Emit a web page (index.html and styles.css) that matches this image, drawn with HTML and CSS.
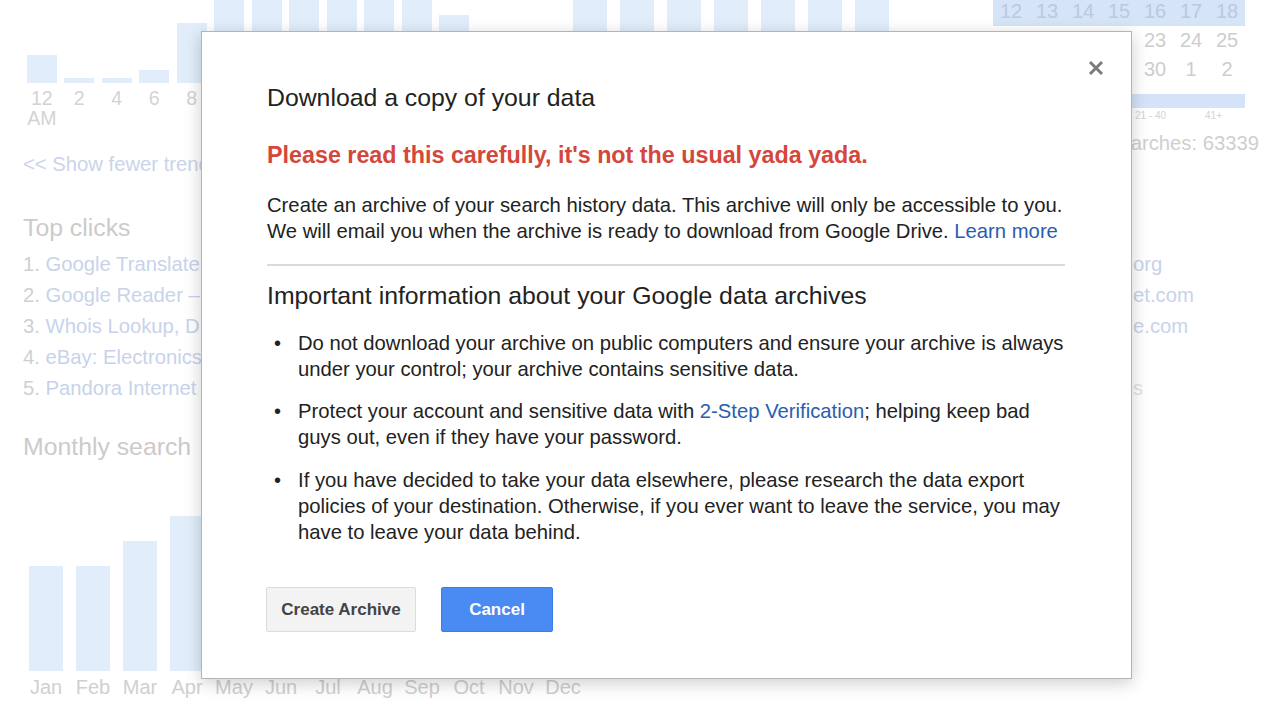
FILE: index.html
```html
<!DOCTYPE html>
<html lang="en">
<head>
<meta charset="utf-8">
<title>Download a copy of your data</title>
<link rel="stylesheet" href="styles.css">
</head>
<body>
<div class="page">
  <div class="col col-left">
    <div class="hbars">
      <div class="hcell"><div class="bar hbar" style="height:28px"></div></div>
      <div class="hcell"><div class="bar hbar" style="height:5px"></div></div>
      <div class="hcell"><div class="bar hbar" style="height:5px"></div></div>
      <div class="hcell"><div class="bar hbar" style="height:13px"></div></div>
      <div class="hcell"><div class="bar hbar" style="height:60px"></div></div>
      <div class="hcell"><div class="bar hbar" style="height:83px"></div></div>
      <div class="hcell"><div class="bar hbar" style="height:83px"></div></div>
      <div class="hcell"><div class="bar hbar" style="height:83px"></div></div>
      <div class="hcell"><div class="bar hbar" style="height:83px"></div></div>
      <div class="hcell"><div class="bar hbar" style="height:83px"></div></div>
      <div class="hcell"><div class="bar hbar" style="height:83px"></div></div>
      <div class="hcell"><div class="bar hbar" style="height:68px"></div></div>
    </div>
    <div class="hlabels">
      <span>12<br>AM</span><span>2</span><span>4</span><span>6</span><span>8</span>
    </div>
    <div class="fewer">&lt;&lt; Show fewer trends</div>
    <div class="section-title clicks-title">Top clicks</div>
    <ol class="clicks">
      <li><span class="num">1.</span> <span class="lnk">Google Translate</span></li>
      <li><span class="num">2.</span> <span class="lnk">Google Reader –</span></li>
      <li><span class="num">3.</span> <span class="lnk">Whois Lookup, D</span></li>
      <li><span class="num">4.</span> <span class="lnk">eBay: Electronics</span></li>
      <li><span class="num">5.</span> <span class="lnk">Pandora Internet</span></li>
    </ol>
    <div class="section-title monthly-title">Monthly search</div>
    <div class="mbars">
      <div class="mcell"><div class="bar mbar" style="height:105px"></div></div>
      <div class="mcell"><div class="bar mbar" style="height:105px"></div></div>
      <div class="mcell"><div class="bar mbar" style="height:130px"></div></div>
      <div class="mcell"><div class="bar mbar" style="height:155px"></div></div>
      <div class="mcell"><div class="bar mbar" style="height:150px"></div></div>
      <div class="mcell"><div class="bar mbar" style="height:140px"></div></div>
      <div class="mcell"><div class="bar mbar" style="height:160px"></div></div>
      <div class="mcell"><div class="bar mbar" style="height:150px"></div></div>
      <div class="mcell"><div class="bar mbar" style="height:145px"></div></div>
      <div class="mcell"><div class="bar mbar" style="height:135px"></div></div>
      <div class="mcell"><div class="bar mbar" style="height:120px"></div></div>
      <div class="mcell"><div class="bar mbar" style="height:110px"></div></div>
    </div>
    <div class="mlabels">
      <span>Jan</span><span>Feb</span><span>Mar</span><span>Apr</span><span>May</span><span>Jun</span>
      <span>Jul</span><span>Aug</span><span>Sep</span><span>Oct</span><span>Nov</span><span>Dec</span>
    </div>
  </div>

  <div class="col col-mid">
    <div class="dbars">
      <div class="dcell"><div class="bar dbar"></div></div>
      <div class="dcell"><div class="bar dbar"></div></div>
      <div class="dcell"><div class="bar dbar"></div></div>
      <div class="dcell"><div class="bar dbar"></div></div>
      <div class="dcell"><div class="bar dbar"></div></div>
      <div class="dcell"><div class="bar dbar"></div></div>
      <div class="dcell"><div class="bar dbar"></div></div>
    </div>
  </div>

  <div class="col col-right">
    <div class="calendar">
      <div class="cal-row current"><span>12</span><span>13</span><span>14</span><span>15</span><span>16</span><span>17</span><span>18</span></div>
      <div class="cal-row"><span></span><span></span><span></span><span></span><span>23</span><span>24</span><span>25</span></div>
      <div class="cal-row"><span></span><span></span><span></span><span></span><span>30</span><span>1</span><span>2</span></div>
    </div>
    <div class="legend">
      <div class="seg seg1"></div><div class="seg seg2"></div><div class="seg seg3"></div><div class="seg seg4"></div>
    </div>
    <div class="legend-labels"><span></span><span></span><span>21 - 40</span><span>41+</span></div>
    <div class="total">searches: 63339</div>
    <ol class="sites">
      <li><span class="lnk">org</span></li>
      <li><span class="lnk">et.com</span></li>
      <li><span class="lnk">e.com</span></li>
      <li><span class="lnk">&nbsp;</span></li>
      <li><span class="lnk faint">s</span></li>
    </ol>
  </div>
</div>

<div class="dialog" role="dialog">
  <button class="close" aria-label="Close">
    <svg width="16" height="16" viewBox="0 0 16 16"><path d="M2 2 L14 14 M14 2 L2 14" stroke="#7b7b7b" stroke-width="3" fill="none"/></svg>
  </button>
  <h1 class="d-title">Download a copy of your data</h1>
  <p class="d-warn">Please read this carefully, it's not the usual yada yada.</p>
  <p class="d-text">Create an archive of your search history data. This archive will only be accessible to you. We will email you when the archive is ready to download from Google Drive. <a href="#" class="d-link">Learn more</a></p>
  <hr class="d-rule">
  <h2 class="d-sub">Important information about your Google data archives</h2>
  <ul class="d-list">
    <li>Do not download your archive on public computers and ensure your archive is always under your control; your archive contains sensitive data.</li>
    <li>Protect your account and sensitive data with <a href="#" class="d-link">2-Step Verification</a>; helping keep bad guys out, even if they have your password.</li>
    <li>If you have decided to take your data elsewhere, please research the data export policies of your destination. Otherwise, if you ever want to leave the service, you may have to leave your data behind.</li>
  </ul>
  <div class="d-actions">
    <button class="btn btn-grey">Create Archive</button>
    <button class="btn btn-blue">Cancel</button>
  </div>
</div>
</body>
</html>
```
FILE: styles.css
```css
*, *::before, *::after { box-sizing: border-box; }
html, body { margin: 0; padding: 0; }
body {
  width: 1280px;
  height: 714px;
  overflow: hidden;
  position: relative;
  background: #ffffff;
  font-family: "Liberation Sans", Arial, sans-serif;
}

/* ---------- faded background page ---------- */
.page {
  display: grid;
  grid-template-columns: 566px 427px 1fr;
  height: 714px;
  color: #d0d0d0;
}
.col-left { padding-left: 23px; }

.bar { background: #e1edfb; }

.hbars { display: flex; align-items: flex-end; height: 83px; }
.hcell { width: 37.5px; height: 100%; display: flex; justify-content: center; align-items: flex-end; }
.hbar { width: 30px; }
.hlabels { display: flex; margin-top: 5px; font-size: 19.5px; line-height: 20px; color: #d3d3d3; }
.hlabels span { width: 37.5px; text-align: center; flex: none; }

.fewer { margin-top: 24px; font-size: 20.25px; line-height: 24px; color: #cad4ea; white-space: nowrap; }

.section-title { font-size: 24.8px; line-height: 30px; color: #cbcbcb; white-space: nowrap; }
.clicks-title { margin-top: 37px; }
.monthly-title { margin-top: 28px; }

.clicks { list-style: none; margin: 6px 0 0; padding: 0; font-size: 20.25px; line-height: 31px; white-space: nowrap; }
.num { color: #d0d0d0; }
.lnk { color: #c8d3ea; }
.lnk.faint { color: #e2e2e2; }

.mbars { display: flex; align-items: flex-end; height: 200px; margin-top: 9px; margin-left: -0.5px; }
.mcell { width: 47px; height: 100%; display: flex; justify-content: center; align-items: flex-end; flex: none; }
.mbar { width: 34px; }
.mlabels { display: flex; margin-top: 6px; margin-left: -0.5px; font-size: 20px; line-height: 20px; color: #d0d0d0; }
.mlabels span { width: 47px; text-align: center; flex: none; }

.dbars { display: flex; align-items: flex-end; height: 83px; }
.dcell { width: 47px; height: 100%; display: flex; justify-content: center; align-items: flex-end; }
.dbar { width: 34px; height: 100%; }

.calendar { width: 252px; margin-top: -3px; font-size: 20px; }
.cal-row { display: grid; grid-template-columns: repeat(7, 36px); height: 29px; line-height: 29px; color: #cdcdcd; }
.cal-row span { text-align: center; }
.cal-row.current { background: #d6e4f8; color: #b9c9e2; }

.legend { display: flex; width: 252px; height: 14px; margin-top: 10px; }
.seg { flex: 1; }
.seg1 { background: #eef4fd; }
.seg2 { background: #e4eefc; }
.seg3, .seg4 { background: #d5e3f9; }
.legend-labels { display: flex; width: 252px; margin-top: 1px; font-size: 10px; line-height: 14px; color: #d3d3d3; }
.legend-labels span { flex: 1; text-align: center; }

.total { margin-top: 8px; padding-right: 21px; text-align: right; font-size: 20.25px; line-height: 24px; color: #cfcfcf; white-space: nowrap; }

.sites { list-style: none; margin: 94px 0 0; padding: 0 0 0 140px; font-size: 20.25px; line-height: 31px; white-space: nowrap; }

/* ---------- dialog ---------- */
.dialog {
  position: absolute;
  left: 201px;
  top: 31px;
  width: 931px;
  padding: 51px 56px 46px 65px;
  background: #ffffff;
  border: 1px solid #b4b4b4;
  box-shadow: 0 4px 16px rgba(0, 0, 0, 0.2);
  color: #222222;
}
.close {
  position: absolute;
  top: 28px;
  right: 27px;
  width: 16px;
  height: 16px;
  padding: 0;
  border: 0;
  background: none;
  display: block;
}
.close svg { display: block; }

.d-title { margin: 0; font-size: 24.8px; line-height: 30px; font-weight: normal; color: #222; }
.d-warn { margin: 27px 0 0; font-size: 23.3px; line-height: 30px; font-weight: bold; color: #d4473a; }
.d-text { margin: 22px 0 0; font-size: 20.25px; line-height: 26px; }
.d-link { color: #2a5db0; text-decoration: none; }
.d-rule { margin: 20px 10px 0 0; border: 0; height: 2px; background: #dadada; }
.d-sub { margin: 15px 0 0; font-size: 24.8px; line-height: 30px; font-weight: normal; color: #222; }
.d-list { margin: 19px 0 0; padding: 0; font-size: 20.25px; line-height: 26px; list-style: none; }
.d-list li { padding-left: 31px; text-indent: -31px; }
.d-list li::before {
  content: "\2022";
  display: inline-block;
  width: 31px;
  padding-left: 7px;
  text-indent: 0;
  font-size: 20px;
  line-height: 20px;
}
.d-list li + li { margin-top: 16px; }
.d-list li:last-child { margin-top: 17px; }

.d-actions { display: flex; gap: 25px; margin-top: 42px; }
.btn {
  height: 45px;
  border-radius: 2px;
  font-family: "Liberation Sans", Arial, sans-serif;
  font-size: 17px;
  font-weight: bold;
  padding: 0;
}
.btn-grey { width: 150px; margin-left: -1px; background: #f3f3f3; border: 1px solid #dcdcdc; color: #444; }
.btn-blue { width: 112px; background: #4a8af3; border: 1px solid #3c7ee8; color: #ffffff; }
```
